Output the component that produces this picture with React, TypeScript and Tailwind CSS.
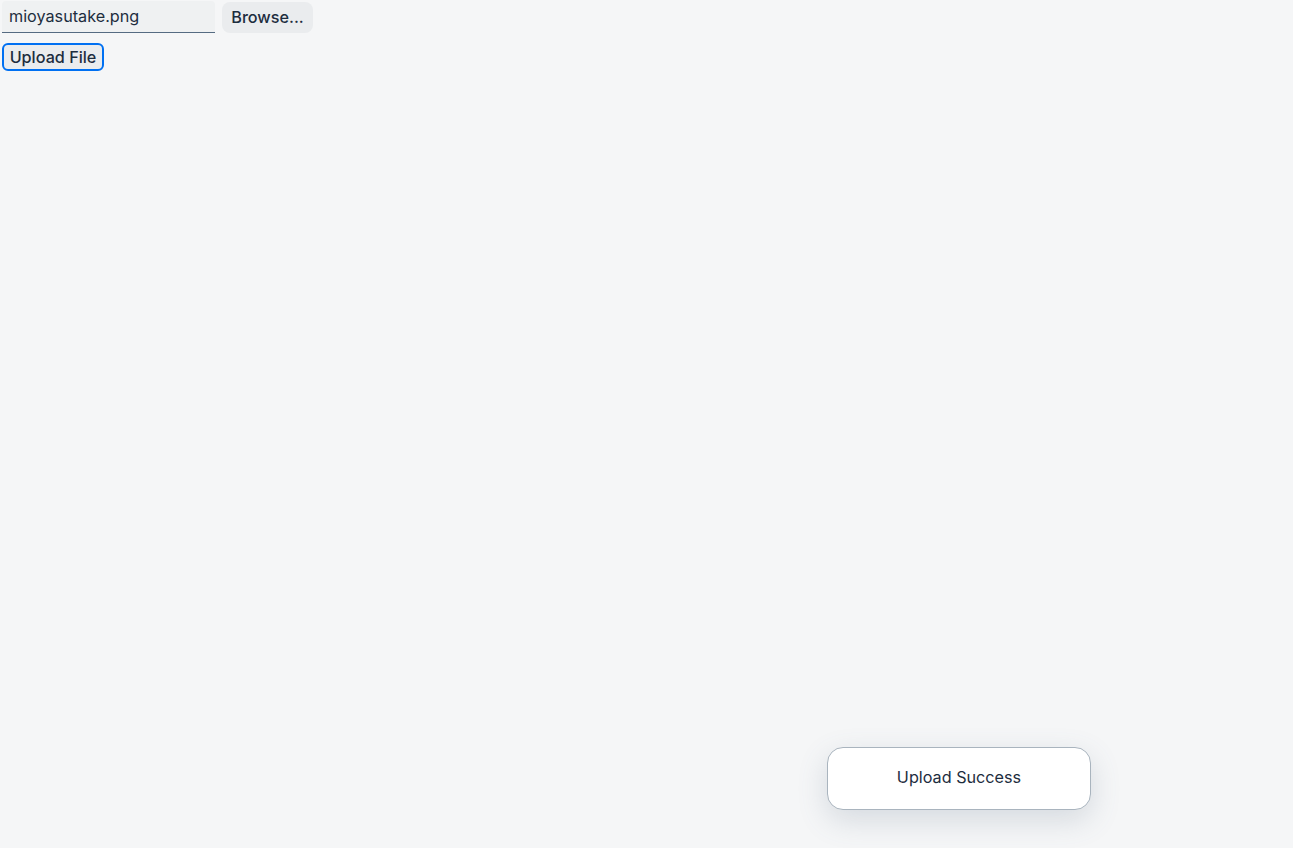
export default function App() {
  return (
    <div
      className="relative w-[1293px] h-[848px] bg-[#f5f6f7] text-[#1d2d3e] overflow-hidden"
      style={{ fontFamily: "Inter, 'Noto Sans', sans-serif" }}
    >
      <div className="flex items-start pl-[2px] pt-[1px] gap-[7px]">
        <div className="w-[213px] h-[32px] bg-[#eff1f2] border-b border-[#556b82] rounded-t-[4px] flex items-center pl-[7px] pb-[1px] text-[16.2px]">
          mioyasutake.png
        </div>
        <div className="mt-[1px] w-[91px] h-[31px] bg-[#eaecee] rounded-[8px] flex items-center justify-center pb-[1px] text-[16.2px] font-medium">
          Browse...
        </div>
      </div>
      <div className="pl-[2px] mt-[10px]">
        <div className="inline-flex w-[102px] h-[28px] items-center justify-center border-2 border-[#0070f2] rounded-[6px] bg-[#eaecee] text-[16.2px] font-medium">
          Upload File
        </div>
      </div>
      <div className="absolute left-[827px] top-[747px] w-[264px] h-[63px] bg-white border border-[#a9b4be] rounded-[16px] shadow-[0_10px_30px_rgba(85,107,130,0.2)] flex items-center justify-center pb-[3px] text-[16.2px]">
        Upload Success
      </div>
    </div>
  );
}
